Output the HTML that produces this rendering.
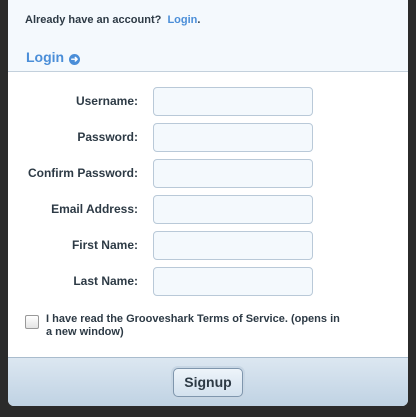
<!DOCTYPE html>
<html><head><style>
body{margin:0;width:416px;height:417px;background:#2b2b2b;font-family:"Liberation Sans",Arial,sans-serif;position:relative;overflow:hidden}
#p{position:absolute;left:8px;top:0;width:400px;height:406px;background:#fff;border-radius:0 0 6px 6px;overflow:hidden}
#hd{height:71px;background:#f4f9fd;border-bottom:1px solid #c3d0dc;position:relative}
.t{position:absolute;font-size:11px;font-weight:bold;color:#2d3a45}
.l{color:#4a8ed8}
.lab{position:absolute;right:270px;font-size:12px;font-weight:bold;color:#2d3a45;text-align:right;white-space:nowrap}
.in{position:absolute;left:145px;width:160px;height:29px;box-sizing:border-box;border:1px solid #b9c9d8;border-radius:4px;background:#f4f9fd}
#ft{position:absolute;left:0;top:357px;width:400px;height:49px;background:linear-gradient(#dce7f1,#bfd2e3);border-top:1px solid #a9bccd}
#btn{position:absolute;left:165px;top:10px;width:70px;height:29px;box-sizing:border-box;border:1px solid #7f96ad;border-radius:5px;background:linear-gradient(#eef4fa,#d3e1ee);box-shadow:0 0 0 2px #c7d6e4;font-size:14px;font-weight:bold;color:#2d3a45;text-align:center;line-height:27px}
</style></head><body>
<div id="p">
<div id="hd">
<div class="t" style="left:17px;top:14px">Already have an account?&nbsp; <span class="l">Login</span>.</div>
<div style="position:absolute;left:18px;top:49px;font-size:14px;font-weight:bold;color:#4a8ed8">Login</div>
<div style="position:absolute;left:61px;top:54px;width:11px;height:11px;border-radius:50%;background:#4a8ed8;color:#fff;font-size:9px;line-height:11px;text-align:center;font-weight:bold">&#10140;</div>
</div>
<div class="lab" style="top:94px">Username:</div><div class="in" style="top:87px"></div>
<div class="lab" style="top:130px">Password:</div><div class="in" style="top:123px"></div>
<div class="lab" style="top:166px">Confirm Password:</div><div class="in" style="top:159px"></div>
<div class="lab" style="top:202px">Email Address:</div><div class="in" style="top:195px"></div>
<div class="lab" style="top:238px">First Name:</div><div class="in" style="top:231px"></div>
<div class="lab" style="top:274px">Last Name:</div><div class="in" style="top:267px"></div>
<div style="position:absolute;left:17px;top:315px;width:12px;height:12px;border:1px solid #999;border-radius:2px;background:linear-gradient(#fff,#e4e4e4)"></div>
<div class="t" style="left:38px;top:313px;width:310px;line-height:13px">I have read the Grooveshark Terms of Service. (opens in<br>a new window)</div>
<div id="ft"><div id="btn">Signup</div></div>
</div>
</body></html>
